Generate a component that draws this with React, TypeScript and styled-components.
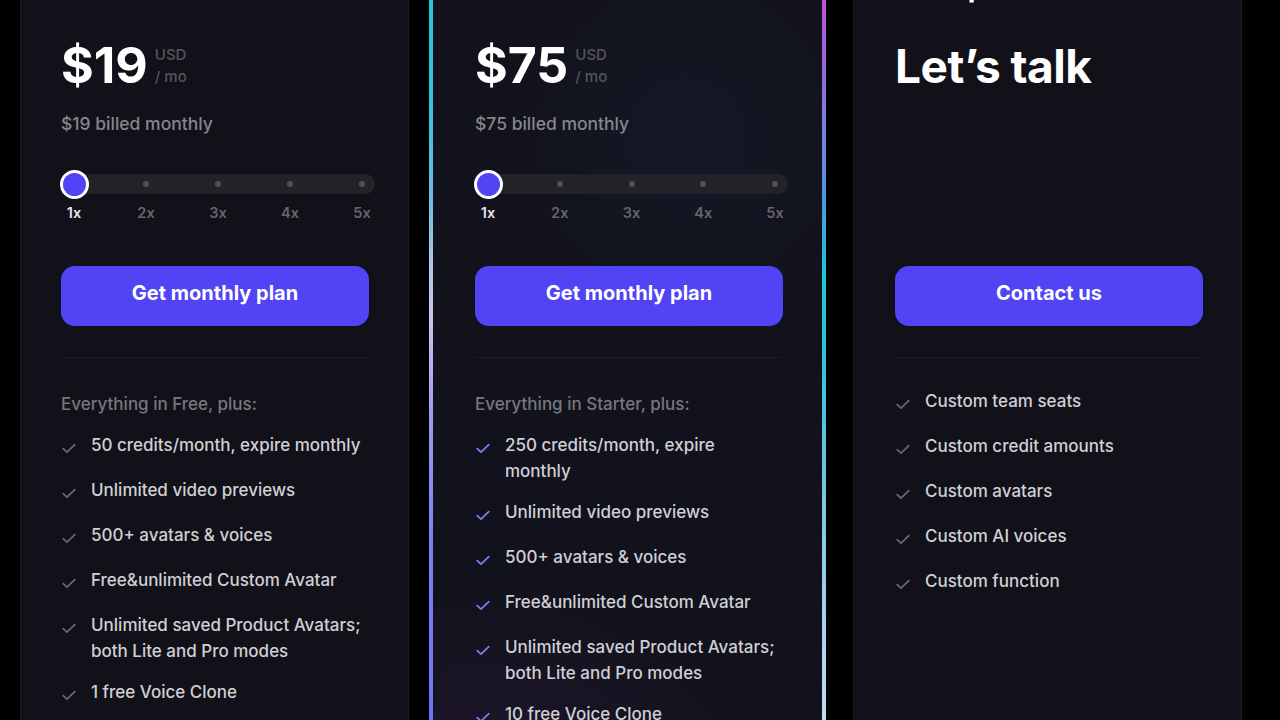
import React from "react";
import styled, { createGlobalStyle } from "styled-components";

const GlobalStyle = createGlobalStyle`
  html, body {
    margin: 0;
    padding: 0;
    background: #000;
    overflow: hidden;
  }
  body {
    font-family: Inter, "Noto Sans", "Liberation Sans", sans-serif;
    -webkit-font-smoothing: antialiased;
  }
`;

const Page = styled.main`
  display: flex;
  align-items: flex-start;
  padding-left: 20px;
  margin-top: -71px;
  height: 791px;
  overflow: hidden;
`;

const Card = styled.section<{ $padLeft: number; $ml: number }>`
  box-sizing: border-box;
  flex-shrink: 0;
  width: 389px;
  height: 940px;
  margin-left: ${(p) => p.$ml}px;
  padding: 39px 33px 0 ${(p) => p.$padLeft}px;
  background: #12111a;
  border: 1px solid #1e1d25;
  border-radius: 16px;
  display: flex;
  flex-direction: column;
`;

const FeaturedCard = styled(Card)`
  width: 397px;
  padding-top: 36px;
  padding-right: 34px;
  border: 4px solid transparent;
  background:
    radial-gradient(110% 45% at 15% 100%, rgba(60, 30, 74, 0.45), transparent 70%) padding-box,
    radial-gradient(70% 30% at 65% 22%, rgba(40, 52, 86, 0.16), transparent 70%) padding-box,
    linear-gradient(#11121c, #11121c) padding-box,
    linear-gradient(
        to bottom,
        #1ec8d8 0px,
        #35c2d8 171px,
        #70bcdc 271px,
        #b4c6e8 341px,
        #c9c3ee 391px,
        #9c9aee 491px,
        #7d80f1 611px,
        #6b74f4 791px
      )
      left top / 50% 100% no-repeat border-box,
    linear-gradient(
        to bottom,
        #c64fe0 71px,
        #9f62e0 121px,
        #7a7fe0 201px,
        #4b98dc 271px,
        #1ec6d6 351px,
        #34c2d8 431px,
        #6cc2de 531px,
        #a2d0ec 671px,
        #c2dcf4 791px
      )
      right top / 50% 100% no-repeat border-box;
`;

const PlanName = styled.h2`
  margin: 0;
  font-size: 28px;
  line-height: 36px;
  font-weight: 700;
  color: #fff;
`;

const TopBlock = styled.div`
  margin-top: 36px;
  height: 225px;
  display: flex;
  flex-direction: column;
`;

const PriceRow = styled.div`
  display: flex;
  align-items: flex-start;
  gap: 7px;
`;

const Price = styled.div`
  font-size: 50px;
  line-height: 48px;
  font-weight: 700;
  color: #fff;
`;

const TalkTitle = styled.div`
  margin-top: 1px;
  font-size: 46px;
  line-height: 48px;
  font-weight: 700;
  letter-spacing: -0.5px;
  color: #fff;
`;

const Suffix = styled.div`
  margin-top: 3px;
  display: flex;
  flex-direction: column;
  font-size: 15px;
  line-height: 22px;
  font-weight: 500;
  color: #55555b;
`;

const Billed = styled.div`
  margin-top: 23px;
  font-size: 17.5px;
  line-height: 24px;
  font-weight: 500;
  color: #86868c;
`;

const Slider = styled.div`
  margin-top: 38px;
  display: flex;
  flex-direction: column;
`;

const Track = styled.div`
  height: 20px;
  border-radius: 10px;
  background: #232327;
  display: flex;
  justify-content: space-between;
  align-items: center;
  padding: 0 13px;
`;

const Stop = styled.div`
  width: 0;
  display: flex;
  justify-content: center;
  align-items: center;
`;

const Dot = styled.span`
  flex-shrink: 0;
  width: 6px;
  height: 6px;
  border-radius: 50%;
  background: #4f4f55;
`;

const Thumb = styled.span`
  flex-shrink: 0;
  width: 23px;
  height: 23px;
  border: 3px solid #fff;
  border-radius: 50%;
  background: #5044f4;
`;

const Labels = styled.div`
  margin-top: 9px;
  display: flex;
  justify-content: space-between;
  padding: 0 13px;
`;

const Label = styled.span<{ $active?: boolean }>`
  width: 0;
  display: flex;
  justify-content: center;
  white-space: nowrap;
  font-size: 14.5px;
  line-height: 20px;
  font-weight: 600;
  color: ${(p) => (p.$active ? "#e6e6ea" : "#66666c")};
`;

const CTA = styled.button`
  width: 308px;
  height: 60px;
  padding: 0 0 6px;
  border: none;
  border-radius: 14px;
  background: #5044f4;
  color: #fff;
  font-family: inherit;
  font-size: 20px;
  font-weight: 700;
  cursor: pointer;
`;

const Divider = styled.hr`
  margin: 31px 0 0;
  width: 306px;
  height: 1px;
  border: none;
  background: #1f1e26;
`;

const FeatureList = styled.ul<{ $mt: number }>`
  margin: ${(p) => p.$mt}px 0 0;
  padding: 0;
  list-style: none;
  width: 304px;
  display: flex;
  flex-direction: column;
  gap: 15px;
`;

const ListHeading = styled.li`
  font-size: 17px;
  line-height: 26px;
  font-weight: 500;
  color: #77777d;
`;

const Item = styled.li`
  display: flex;
  align-items: flex-start;
  gap: 14px;
  min-height: 30px;
  font-size: 17px;
  line-height: 26px;
  font-weight: 500;
  color: #d0d0d4;
`;

const CheckIcon = styled.svg`
  flex-shrink: 0;
  margin-top: 8px;
`;

const Check = ({ color }: { color: string }) => (
  <CheckIcon width="16" height="16" viewBox="0 0 16 16" fill="none">
    <path
      d="M2.2 8.6 L6 12.2 L13.8 4.6"
      stroke={color}
      strokeWidth="1.7"
      strokeLinecap="round"
      strokeLinejoin="round"
    />
  </CheckIcon>
);

const MultiplierSlider = () => (
  <Slider>
    <Track>
      <Stop>
        <Thumb />
      </Stop>
      {[2, 3, 4, 5].map((n) => (
        <Stop key={n}>
          <Dot />
        </Stop>
      ))}
    </Track>
    <Labels>
      {[1, 2, 3, 4, 5].map((n) => (
        <Label key={n} $active={n === 1}>
          {n}x
        </Label>
      ))}
    </Labels>
  </Slider>
);

const Features = ({
  heading,
  items,
  checkColor,
  mt,
}: {
  heading?: string;
  items: string[];
  checkColor: string;
  mt: number;
}) => (
  <FeatureList $mt={mt}>
    {heading && <ListHeading>{heading}</ListHeading>}
    {items.map((t) => (
      <Item key={t}>
        <Check color={checkColor} />
        <span>{t}</span>
      </Item>
    ))}
  </FeatureList>
);

const PriceBlock = ({ price }: { price: number }) => (
  <TopBlock>
    <PriceRow>
      <Price>${price}</Price>
      <Suffix>
        <span>USD</span>
        <span>/ mo</span>
      </Suffix>
    </PriceRow>
    <Billed>${price} billed monthly</Billed>
    <MultiplierSlider />
  </TopBlock>
);

const starterItems = [
  "50 credits/month, expire monthly",
  "Unlimited video previews",
  "500+ avatars & voices",
  "Free&unlimited Custom Avatar",
  "Unlimited saved Product Avatars; both Lite and Pro modes",
  "1 free Voice Clone",
  "Remove watermark",
];

const creatorItems = [
  "250 credits/month, expire monthly",
  "Unlimited video previews",
  "500+ avatars & voices",
  "Free&unlimited Custom Avatar",
  "Unlimited saved Product Avatars; both Lite and Pro modes",
  "10 free Voice Clone",
  "Remove watermark",
];

const enterpriseItems = [
  "Custom team seats",
  "Custom credit amounts",
  "Custom avatars",
  "Custom AI voices",
  "Custom function",
];

export default function App() {
  return (
    <>
      <GlobalStyle />
      <Page>
        <Card $padLeft={40} $ml={0}>
          <PlanName>Starter</PlanName>
          <PriceBlock price={19} />
          <CTA>Get monthly plan</CTA>
          <Divider />
          <Features
            mt={33}
            heading="Everything in Free, plus:"
            items={starterItems}
            checkColor="#6a6a70"
          />
        </Card>
        <FeaturedCard $padLeft={42} $ml={20}>
          <PlanName>Creator</PlanName>
          <PriceBlock price={75} />
          <CTA>Get monthly plan</CTA>
          <Divider />
          <Features
            mt={33}
            heading="Everything in Starter, plus:"
            items={creatorItems}
            checkColor="#7f80f4"
          />
        </FeaturedCard>
        <Card $padLeft={41} $ml={27}>
          <PlanName>Enterprise</PlanName>
          <TopBlock>
            <TalkTitle>Let’s talk</TalkTitle>
          </TopBlock>
          <CTA>Contact us</CTA>
          <Divider />
          <Features mt={30} items={enterpriseItems} checkColor="#6a6a70" />
        </Card>
      </Page>
    </>
  );
}
